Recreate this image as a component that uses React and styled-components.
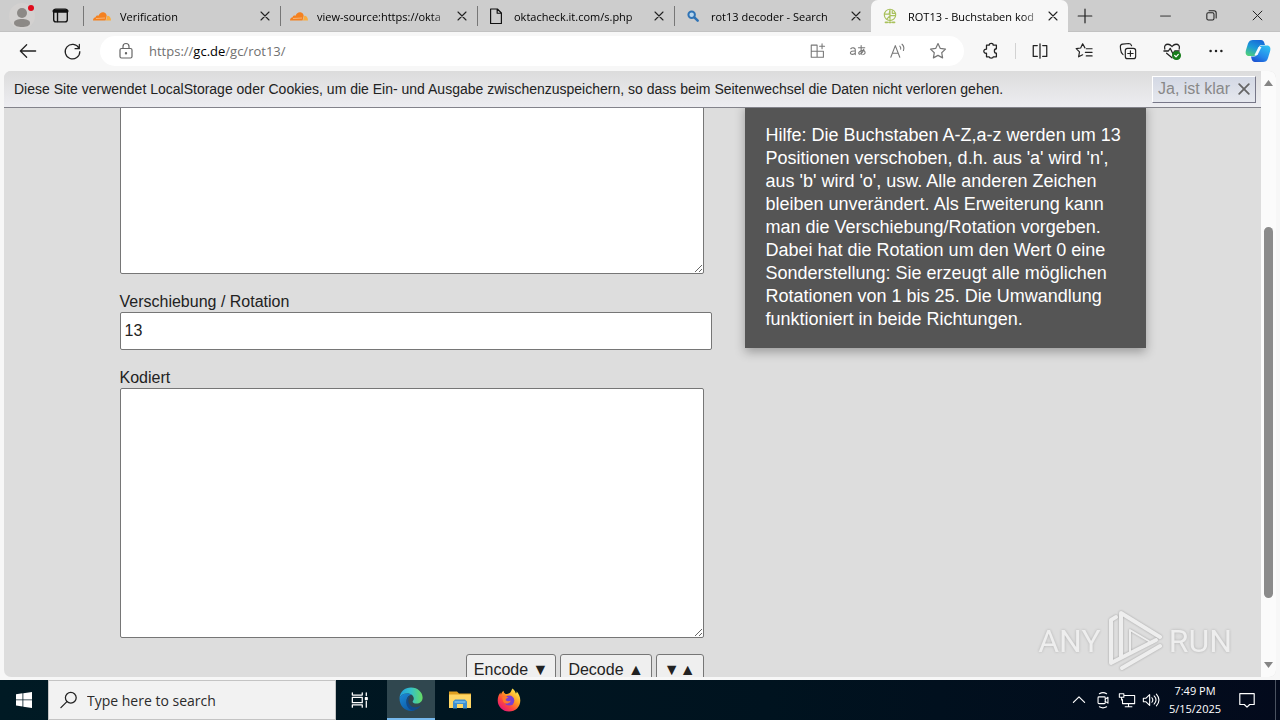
import React from "react";
import styled, { createGlobalStyle } from "styled-components";

const Global = createGlobalStyle`
  * { box-sizing: border-box; }
  html, body { margin: 0; padding: 0; overflow: hidden; }
  body { font-family: "Liberation Sans", Arial, sans-serif; font-size: 16px; color: #222; }
  button, input, textarea { font: inherit; color: inherit; }
  button { border: 0; padding: 0; background: none; }
  svg { display: block; flex: none; }
`;

const UI = '"Open Sans", "Noto Sans", sans-serif';

const Screen = styled.div`
  display: flex;
  flex-direction: column;
  height: 100vh;
  background: #f7f7f7;
`;

/* ---------- tab strip ---------- */
const TabStrip = styled.header`
  display: flex;
  height: 32px;
  flex: none;
  background: #cdcdcd;
  border-bottom: 1px solid #c2c2c2;
  font-family: ${UI};
  font-size: 11px;
  color: #000;
`;
const StripButton = styled.button`
  display: flex;
  align-items: center;
  justify-content: center;
  width: ${(p) => p.$w}px;
  flex: none;
`;
const Profile = styled(StripButton)`
  padding-left: 8px;
`;
const Tab = styled.div`
  display: flex;
  align-items: center;
  flex: 0 1 197px;
  min-width: 0;
  height: 32px;
  padding: 0 7px 0 10px;
  background: ${(p) => (p.$active ? "#f7f7f7" : "transparent")};
  border-radius: ${(p) => (p.$active ? "7px 7px 0 0" : "0")};
  &::before {
    content: "";
    width: 1px;
    height: 20px;
    margin-left: -10px;
    margin-right: 9px;
    background: ${(p) => (p.$active ? "transparent" : "#777")};
  }
`;
const TabTitle = styled.span`
  flex: 1;
  min-width: 0;
  margin-left: 9px;
  overflow: hidden;
  white-space: nowrap;
  mask-image: linear-gradient(to right, #000 calc(100% - 16px), transparent calc(100% + 6px));
`;
const TabClose = styled.button`
  display: flex;
  justify-content: center;
  width: 16px;
  margin-left: 7px;
`;
const Spacer = styled.div`
  flex: ${(p) => p.$grow || 1};
`;

/* ---------- toolbar ---------- */
const Toolbar = styled.nav`
  display: flex;
  align-items: center;
  height: 39px;
  flex: none;
  padding: 0 2px 1px 6px;
  background: #f7f7f7;
`;
const ToolButton = styled.button`
  display: flex;
  align-items: center;
  justify-content: center;
  width: ${(p) => p.$w || 44}px;
  height: 30px;
  flex: none;
`;
const Address = styled.div`
  display: flex;
  align-items: center;
  flex: 1;
  min-width: 0;
  height: 30px;
  margin: 0 5px 0 6px;
  padding: 0 6px 0 16px;
  border-radius: 15px;
  background: #fff;
  font-family: ${UI};
  font-size: 13px;
  color: #707070;
`;
const Url = styled.a`
  flex: 1;
  margin-left: 13px;
  color: inherit;
  text-decoration: none;
  b { font-weight: 400; color: #000; }
`;
const Divider = styled.span`
  width: 1px;
  height: 16px;
  margin: 0 2px;
  background: #d2d2d2;
`;

/* ---------- page ---------- */
const Viewport = styled.div`
  display: flex;
  flex: 1;
  min-height: 0;
  margin: 0 4px 3px;
  border-radius: 7px;
  overflow: hidden;
  background: #ddd;
  position: relative;
`;
const Page = styled.div`
  display: flex;
  flex-direction: column;
  flex: 1;
  min-width: 0;
`;
const CookieBar = styled.div`
  display: flex;
  align-items: center;
  justify-content: space-between;
  height: 37px;
  flex: none;
  padding: 0 5px 0 10px;
  border-bottom: 1px solid #83838b;
  background: linear-gradient(#dcdcdc, #ededf1);
  font-size: 14px;
`;
const Consent = styled.button`
  display: flex;
  align-items: center;
  justify-content: space-between;
  gap: 8px;
  height: 27px;
  padding: 0 5px;
  border: 1px solid;
  border-color: #fff #778 #778 #fff;
  background: linear-gradient(#d3d8e4, #e6e8ee);
  font-size: 16px;
  color: #888;
`;
const Main = styled.main`
  flex: 1;
  min-height: 0;
  overflow: hidden;
`;
const Columns = styled.div`
  display: grid;
  grid-template-columns: 592fr 401fr;
  gap: 33px;
  align-items: start;
  max-width: 1026px;
  margin: -84px auto 0;
`;
const Form = styled.form`
  display: flex;
  flex-direction: column;
`;
const Field = styled.div`
  display: flex;
  flex-direction: column;
  margin-bottom: 16px;
`;
const Label = styled.label`
  padding-top: 2px;
  line-height: 20px;
`;
const Area = styled.textarea`
  width: calc(100% - 8px);
  height: 250px;
  border: 1px solid #767676;
  border-radius: 2px;
  background: #fff;
  padding: 4px;
  outline: 0;
`;
const Input = styled.input`
  width: 100%;
  height: 38px;
  border: 1px solid #767676;
  border-radius: 2px;
  background: #fff;
  padding: 0 4px;
  outline: 0;
`;
const Actions = styled.div`
  display: flex;
  justify-content: flex-end;
  gap: 4px;
  margin-right: 8px;
`;
const Action = styled.button`
  height: 32px;
  padding: 0 7px;
  border: 1px solid #767676;
  border-radius: 3px;
  background: #efefef;
`;
const Help = styled.aside`
  margin-top: 79px;
  padding: 21px 21px 17px;
  background: #555;
  box-shadow: 0 4px 10px rgba(0, 0, 0, 0.3);
  color: #fff;
  font-size: 18px;
  line-height: 23px;
`;
const ScrollTrack = styled.div`
  display: flex;
  flex-direction: column;
  align-items: center;
  width: 15px;
  padding: 9px 0;
  background: #fbfbfb;
`;
const Thumb = styled.div`
  width: 9px;
  height: 63%;
  border-radius: 5px;
  background: #8b8b8b;
`;
const Watermark = styled.div`
  position: absolute;
  right: 44px;
  bottom: 4px;
  display: flex;
  align-items: center;
  gap: 5px;
  font-family: Roboto, "Liberation Sans", sans-serif;
  font-size: 32px;
  color: #f0f0f0;
  text-shadow: 0 0 3px #aaa;
  opacity: 0.9;
  pointer-events: none;
`;

/* ---------- taskbar ---------- */
const Taskbar = styled.footer`
  display: flex;
  height: 40px;
  flex: none;
  background: linear-gradient(to right, #001a24, #00131f 60%, #030a1c);
  color: #fff;
  font-family: ${UI};
`;
const TaskButton = styled.button`
  display: flex;
  align-items: center;
  justify-content: center;
  width: ${(p) => p.$w || 48}px;
  flex: none;
  margin-right: ${(p) => p.$gap || 0}px;
  background: ${(p) => (p.$active ? "#30474f" : "transparent")};
  border-bottom: ${(p) => (p.$active ? "2px solid #76b9ed" : "0")};
  border-left: ${(p) => (p.$edge ? "1px solid #4a5260" : "0")};
`;
const Search = styled.label`
  display: flex;
  align-items: center;
  gap: 9px;
  width: 288px;
  padding-left: 11px;
  background: #f2f2f2;
  border: 1px solid #c4c4c4;
  color: #222;
`;
const SearchInput = styled.input`
  flex: 1;
  min-width: 0;
  padding: 0;
  border: 0;
  outline: 0;
  background: transparent;
  font-size: 14px;
  &::placeholder { color: #2b2b2b; opacity: 1; }
`;
const Clock = styled.time`
  width: 64px;
  padding-top: 2px;
  text-align: center;
  font-size: 11px;
  line-height: 18px;
`;

/* ---------- icons ---------- */
const Icon = ({ s = 20, c = "#222", w = 1.2, children, ...rest }) => (
  <svg width={s} height={s} viewBox="0 0 20 20" fill="none" stroke={c} strokeWidth={w}
    strokeLinecap="round" strokeLinejoin="round" aria-hidden="true" {...rest}>
    {children}
  </svg>
);
const star = "M10 2.6l2.3 4.8 5.2.7-3.8 3.6.9 5.2-4.6-2.5-4.6 2.5.9-5.2L2.5 8.1l5.2-.7z";

const CloudIcon = () => (
  <svg width="18" height="16" viewBox="0 0 18 16">
    <path d="M0 12.4C0 10.500 1.200 9.400 2.700 9.300 2.700 7.600 4.600 7 5.600 7.800 6.400 5 9 3.600 11.200 4.500 12.800 5.100 13.500 6.400 13.700 7.800L12.600 12.400z" fill="#f48120" />
    <path d="M13 12.400l1.200-4.500c2-.3 3.600 1.200 3.800 4.500z" fill="#faad3f" />
    <path d="M3 10.500l9-.5" stroke="#f9c08a" strokeWidth="0.800" />
  </svg>
);
const PageIcon = () => (
  <Icon s={18} c="#111" w={1.3}>
    <path d="M4 2.200h7.500L16 6.700v11.600H4zM11.300 2.400v4.500h4.500" />
  </Icon>
);
const LensIcon = () => (
  <Icon s={18} c="#2f73b5" w={2.2}>
    <circle cx="8.500" cy="8.500" r="3.600" fill="#b7d6ee" />
    <path d="M11.500 11.500l3.700 3.700" strokeWidth="2.800" />
  </Icon>
);
const GlobeIcon = () => (
  <Icon s={18} c="#a9c15c" w={1.300}>
    <circle cx="10" cy="8.800" r="6.300" />
    <path d="M4 8h5l1-5M10 3v12M10 9.500h6M6.500 13.500l3.500-4M12.500 4v3h3" />
    <path d="M5 17h2M9 17h2M13 17h2" strokeWidth="2" />
  </Icon>
);
const CloseGlyph = ({ s = 11, c = "#222", w = 2.2 }) => (
  <Icon s={s} c={c} w={w}><path d="M2 2l16 16M18 2L2 18" /></Icon>
);
const EdgeIcon = () => (
  <svg width="26" height="26" viewBox="0 0 26 26">
    <defs>
      <linearGradient id="eg1" x1="0" y1="0.300" x2="1" y2="0.300">
        <stop offset="0" stopColor="#1f9fe0" /><stop offset="0.500" stopColor="#35c1c8" /><stop offset="1" stopColor="#66dc62" />
      </linearGradient>
      <linearGradient id="eg2" x1="0" y1="0" x2="0.700" y2="1">
        <stop offset="0" stopColor="#1b8ad8" /><stop offset="1" stopColor="#0c59a4" />
      </linearGradient>
    </defs>
    <path d="M1.500 12C2.200 5.500 7 1.500 13 1.500c7 0 11.600 5 11.600 10 0 4-3 6-6 6-2.600 0-4-1-4-1.800 0-.8 1.200-1.200 1.200-3.200 0-2.500-2.500-5-6.500-5-4 0-6.700 2-7.800 4.500z" fill="url(#eg1)" />
    <path d="M1.500 12c1-2.600 4-4.600 7.500-4.600 1.800 0 3.500.5 4.700 1.400C10.500 9 8.500 12 8.500 15c0 5 4 8.500 8.500 9.300-7.500 2.500-15.500-2.500-15.500-12.300z" fill="url(#eg2)" />
    <path d="M10.700 12.500C9 18 13.500 21.800 18 21.300c2-.2 3.800-1 4.800-1.700-1 2-3.800 4.600-7.800 5C10 23.500 7.500 19 8.600 14.500c.5-2.300 2-4.500 4-5.200-1 .9-1.600 2-1.900 3.200z" fill="#114a8b" />
  </svg>
);
const FolderIcon = () => (
  <svg width="22" height="20" viewBox="0 0 22 20">
    <path d="M0 1.500h8l2 2h12V7H0z" fill="#e0a020" />
    <path d="M0 4.500h22V18H0z" fill="#ffd664" />
    <path d="M4 11.500l2-2h10l2 2V18.500h-4V14H8v4.500H4z" fill="#3f8fd0" />
    <path d="M5.500 11h11v2h-11z" fill="#69b3e7" />
  </svg>
);
const FirefoxIcon = () => (
  <svg width="24" height="24" viewBox="0 0 24 24">
    <defs>
      <linearGradient id="ff" x1="0.850" y1="0.100" x2="0.200" y2="0.900">
        <stop offset="0" stopColor="#ffe84a" /><stop offset="0.400" stopColor="#ff9a22" />
        <stop offset="0.700" stopColor="#ff4a3c" /><stop offset="1" stopColor="#e81b72" />
      </linearGradient>
    </defs>
    <path d="M15.500.500c2 1.500 3 3.200 3.300 5 1-.5.800-1.500.8-2.200 2.200 2.300 3.700 5.700 3.700 9.200C23.300 19 18.500 23.500 12 23.500S.700 18.500.700 12.500C.700 9 2 6 3.500 4.500c0 1 .1 1.700.5 2.200.3-1.700 1.200-3 2.600-3.900 0 1.500.6 2.500 2 3.200 2 0 3.500-.5 4.700-1.500C14 3.500 14.500 2 15.500.500z" fill="url(#ff)" />
    <circle cx="12.300" cy="12.600" r="5" fill="#7a3fd0" />
    <path d="M5.500 8.800c2.500-.8 4.600-.3 6 1-1.700.2-2.800 1.200-2.800 2.400 1.700 1.500 3.300 1.200 5 .6-.8 2.300-3.200 3.200-5.600 2.500C6 14.500 5 11 5.500 8.800z" fill="#ff7a2a" />
  </svg>
);
const CopilotIcon = () => (
  <svg width="26" height="24" viewBox="0 0 26 24">
    <defs>
      <linearGradient id="cp1" x1="0.700" y1="0" x2="0.200" y2="1">
        <stop offset="0" stopColor="#1769d8" /><stop offset="0.500" stopColor="#1c9ad8" /><stop offset="1" stopColor="#4fd07a" />
      </linearGradient>
      <linearGradient id="cp2" x1="0.800" y1="0" x2="0.200" y2="1">
        <stop offset="0" stopColor="#2fc0f2" /><stop offset="0.600" stopColor="#2487ea" /><stop offset="1" stopColor="#1b50d0" />
      </linearGradient>
    </defs>
    <path d="M8 1h8c2 0 3 1.500 3.500 3.500L20 6h-3c-2 0-3 1-3.500 3l-1.500 5c-.7 2-1.500 3-3.500 3H4c-3 0-4-2.500-3-6l2-6.500C4 2 5.500 1 8 1z" fill="url(#cp1)" />
    <path d="M18 23h-8c-2 0-3-1.500-3.500-3.500L6 17.500h3c2 0 3-1 3.500-3l1.500-5c.7-2 1.500-3 3.500-3H22c3 0 4 2.500 3 6l-2 6.500c-1 3-2.500 4-5 4z" fill="url(#cp2)" />
    <path d="M13.500 8h3l-4 8h-3z" fill="#f4fbff" />
  </svg>
);

const tabs = [
  { title: "Verification", icon: <CloudIcon /> },
  { title: "view-source:https://okta", icon: <CloudIcon /> },
  { title: "oktacheck.it.com/s.php", icon: <PageIcon /> },
  { title: "rot13 decoder - Search", icon: <LensIcon /> },
  { title: "ROT13 - Buchstaben kod", icon: <GlobeIcon />, active: true },
];

const addressActions = [
  ["Apps", <Icon key="a" s={18} c="#777"><path d="M2.500 3.500h6.500v13.500h-6.500zM2.500 10.300h13.500v6.700H9M9 10.300h7M14.500 2v5.500M11.800 4.700h5.500" /></Icon>],
  ["Translate", <Icon key="t" s={18} c="#777">
    <path d="M2 7.500C3.500 6 7 6 7 8.700V14M7 10C4 9.700 1.500 10.500 1.500 12.200S5 14.500 7 12.300M10.500 6.300h7M13.500 4v7.500c0 1.500.5 2.300 1 2.500M16.500 8c-1 4-3.800 6-5.300 5.300-1.500-1.200 1-4 4-4s3.800 3.500 1 4.500" />
  </Icon>],
  ["Read aloud", <Icon key="r" s={18} c="#777"><path d="M2 17L7 4l5 13M3.800 12.500h6.500M12 4.500c1 1 1.300 2.300 1 3.500M14.500 2.500c2 2 2.500 4.500 1.500 7" /></Icon>],
  ["Favorite", <Icon key="f" s={20} c="#777"><path d={star} /></Icon>],
];

const browserActions = [
  ["Split screen", <Icon key="s" s={18} w={1.400}><path d="M7 4H2.500v12H7M13 4h4.500v12H13M10 2v16" /></Icon>],
  ["Favorites", <Icon key="f" s={18} w={1.300}><path d="M11 6.500L8.500 2 6.300 6.700l-5 .7L5 11l-1 5.500 4.500-2.300M12.500 7.500H19M11.500 11.500H19M12.500 15.500H19" /></Icon>],
  ["Collections", <Icon key="c" s={18} w={1.300}><rect x="7" y="7" width="11.500" height="11.500" rx="2.500" /><path d="M12.700 9.800v6M9.700 12.800h6M4.500 14C2.500 12.500 2 11 1.800 8.500L1.500 5C1.500 3.500 2.500 2.500 4 2.300L11 1.700c1.500 0 2.600.8 3 2.500" /></Icon>],
  ["Essentials", <Icon key="e" s={18} w={1.400}>
    <path d="M2 8C1 4 3 2.500 5.500 2.500 8 2.500 9 4 10 5c1-1 2-2.500 4.500-2.500S19 4 18 8M1 10h5l2-3 3 6 2-3h5M4 12.500l6 5" />
    <circle cx="15" cy="15" r="4.300" fill="#177d1b" stroke="#177d1b" /><path d="M13 15l1.500 1.500L17 13.800" stroke="#fff" />
  </Icon>],
  ["More", <Icon key="m" s={18} c="none"><g fill="#222"><circle cx="4" cy="10" r="1.400" /><circle cx="10" cy="10" r="1.400" /><circle cx="16" cy="10" r="1.400" /></g></Icon>],
];

const trayIcons = [
  ["Hidden icons", <Icon key="h" s={16} c="#fff" w={1.500}><path d="M3 13l7-7 7 7" /></Icon>],
  ["Camera", <Icon key="c" s={18} c="#fff" w={1.200}><rect x="4.500" y="6.500" width="8" height="7.500" rx="1" /><path d="M12.500 9l3-2v6.500l-3-2M6 3c2.500-1.500 5.500-1.500 8 0M6 17.500c2.500 1.500 5.500 1.500 8 0" /></Icon>],
  ["Network", <Icon key="n" s={18} c="#fff" w={1.200}><path d="M7 5h11.500v9H5V9.500M11.700 14v3.500M8 17.500h7.500M1.500 3h5v4h-5zM4 7v3" /></Icon>],
  ["Volume", <Icon key="v" s={18} c="#fff" w={1.200}><path d="M1.500 8h3L8.500 4v12l-4-4h-3zM11 7.500c1.200 1.500 1.200 3.500 0 5M13.500 5.500c2.500 2.700 2.500 6.300 0 9M16 3.500c3.500 4 3.500 9 0 13" /></Icon>],
];

export default function App() {
  return (
    <Screen>
      <Global />
      <TabStrip>
        <Profile $w={37} aria-label="Profile">
          <svg width="28" height="28" viewBox="0 0 28 28">
            <circle cx="13" cy="14" r="13" fill="#d3d1d0" />
            <circle cx="13" cy="11" r="5" fill="#8c8986" />
            <path d="M5 21c0-3 4-4 8-4s8 1 8 4-4 4-8 4-8-1-8-4z" fill="#8c8986" />
            <circle cx="22" cy="6" r="3" fill="#e00b1c" />
          </svg>
        </Profile>
        <StripButton $w={46} aria-label="Tab actions">
          <Icon s={17} c="#111" w={1.600}><rect x="2" y="2.500" width="16" height="15" rx="2.500" /><path d="M2.500 4.800h15" strokeWidth="4" /><path d="M6.500 6v11" /></Icon>
        </StripButton>
        {tabs.map((t) => (
          <Tab key={t.title} $active={t.active}>
            {t.icon}
            <TabTitle>{t.title}</TabTitle>
            <TabClose aria-label="Close tab"><CloseGlyph s={10} /></TabClose>
          </Tab>
        ))}
        <StripButton $w={34} aria-label="New tab"><Icon s={16} w={1.500}><path d="M10 1.500v17M1.500 10h17" /></Icon></StripButton>
        <Spacer />
        <StripButton $w={46} aria-label="Minimize"><Icon s={11} w={1.600}><path d="M1 11h18" /></Icon></StripButton>
        <StripButton $w={46} aria-label="Restore"><Icon s={11} w={1.900}><rect x="1.500" y="5" width="13" height="13" rx="2.500" /><path d="M5.500 1.500h9c2.500 0 4 1.500 4 4v9" /></Icon></StripButton>
        <StripButton $w={46} aria-label="Close"><CloseGlyph s={11} w={1.800} /></StripButton>
      </TabStrip>

      <Toolbar>
        <ToolButton aria-label="Back"><Icon s={18} w={1.400}><path d="M18.500 10H1.500M8.500 3l-7 7 7 7" /></Icon></ToolButton>
        <ToolButton aria-label="Reload"><Icon s={19} w={1.300}><path d="M16.800 6.500A7.700 7.700 0 1 0 17.700 10M17.200 2.500v4.500h-4.500" /></Icon></ToolButton>
        <Address>
          <Icon c="#666"><rect x="4" y="7.500" width="12" height="9.500" rx="1.500" /><path d="M7 7.500V5.500a3 3 0 0 1 6 0v2" /><circle cx="10" cy="12.300" r="0.600" fill="#666" /></Icon>
          <Url href="#rot13">https://<b>gc.de</b>/gc/rot13/</Url>
          {addressActions.map(([n, i]) => <ToolButton key={n} $w={40} aria-label={n}>{i}</ToolButton>)}
        </Address>
        <ToolButton aria-label="Extensions">
          <Icon s={18} w={1.400}><path d="M5 3.500h3c0-2.700 4.500-2.700 4.500 0H16v4c-3 0-3 5 0 5v4h-3.500c0 2-4.500 2-4.500 0H5v-4c-4 .5-4-5 0-4.500z" /></Icon>
        </ToolButton>
        <Divider />
        {browserActions.map(([n, i]) => <ToolButton key={n} aria-label={n}>{i}</ToolButton>)}
        <ToolButton $w={40} aria-label="Copilot"><CopilotIcon /></ToolButton>
      </Toolbar>

      <Viewport>
        <Page>
          <CookieBar>
            <span>Diese Site verwendet LocalStorage oder Cookies, um die Ein- und Ausgabe zwischenzuspeichern, so dass beim Seitenwechsel die Daten nicht verloren gehen.</span>
            <Consent>Ja, ist klar <CloseGlyph s={12} c="#666" w={3} /></Consent>
          </CookieBar>
          <Main>
            <Columns>
              <Form onSubmit={(e) => e.preventDefault()}>
                <Field><Area aria-label="Text" /></Field>
                <Field>
                  <Label htmlFor="rotation">Verschiebung / Rotation</Label>
                  <Input id="rotation" defaultValue="13" />
                </Field>
                <Field>
                  <Label htmlFor="encoded">Kodiert</Label>
                  <Area id="encoded" />
                </Field>
                <Actions>
                  <Action type="button">Encode ▼</Action>
                  <Action type="button">Decode ▲</Action>
                  <Action type="button">▼▲</Action>
                </Actions>
              </Form>
              <Help>
                Hilfe: Die Buchstaben A-Z,a-z werden um 13 Positionen verschoben, d.h. aus 'a' wird 'n', aus 'b' wird 'o', usw. Alle anderen Zeichen bleiben unverändert. Als Erweiterung kann man die Verschiebung/Rotation vorgeben. Dabei hat die Rotation um den Wert 0 eine Sonderstellung: Sie erzeugt alle möglichen Rotationen von 1 bis 25. Die Umwandlung funktioniert in beide Richtungen.
              </Help>
            </Columns>
          </Main>
        </Page>
        <ScrollTrack>
          <svg width="9" height="6" viewBox="0 0 9 6"><path d="M4.500 0L9 6H0z" fill="#858585" /></svg>
          <Spacer $grow={141} />
          <Thumb />
          <Spacer $grow={64} />
          <svg width="9" height="6" viewBox="0 0 9 6"><path d="M4.500 6L9 0H0z" fill="#858585" /></svg>
        </ScrollTrack>
        <Watermark>
          <span>ANY</span>
          <svg width="58" height="64" viewBox="0 0 58 64" fill="none" stroke="#f0f0f0" strokeWidth="4" strokeLinejoin="round" strokeLinecap="round" style={{ filter: "drop-shadow(0 0 1px #999)" }}>
            <path d="M10 8L5 11V54L50 31" />
            <path d="M15 48V4L54 28" />
            <path d="M24 44V21L46 34" strokeWidth="2" />
            <path d="M16 59L54 37" />
          </svg>
          <span>RUN</span>
        </Watermark>
      </Viewport>

      <Taskbar>
        <TaskButton aria-label="Start">
          <svg width="16" height="16" viewBox="0 0 16 16" fill="#fff"><path d="M0 2.200l6.500-.9v6.200H0zM7.300 1.200L16 0v7.500H7.300zM0 8.300h6.500v6.200L0 13.600zM7.300 8.300H16V16l-8.700-1.200z" /></svg>
        </TaskButton>
        <Search>
          <Icon s={18} w={1.400}><circle cx="12" cy="7.500" r="6" /><path d="M7.700 11.800L1 18.500" /></Icon>
          <SearchInput placeholder="Type here to search" aria-label="Type here to search" />
        </Search>
        <TaskButton $gap={3} aria-label="Task view">
          <Icon s={18} c="#fff" w={1.400}><path d="M1.500 2v2.500h11V2M1.500 18v-2.500h11V18M1.500 7h11v6h-11zM17 2v3M17 11.500V18" /><path d="M16 7.500h2v2h-2z" fill="#fff" /></Icon>
        </TaskButton>
        <TaskButton $active $gap={1} aria-label="Edge"><EdgeIcon /></TaskButton>
        <TaskButton $gap={1} aria-label="File Explorer"><FolderIcon /></TaskButton>
        <TaskButton aria-label="Firefox"><FirefoxIcon /></TaskButton>
        <Spacer />
        {trayIcons.map(([n, i]) => <TaskButton key={n} $w={24} aria-label={n}>{i}</TaskButton>)}
        <Clock>7:49 PM<br />5/15/2025</Clock>
        <TaskButton $w={40} $gap={8} aria-label="Notifications">
          <Icon s={18} c="#fff" w={1.300}><path d="M2 3h16v12h-5l-3 3-3-3H2z" /></Icon>
        </TaskButton>
        <TaskButton $w={5} $edge aria-label="Show desktop" />
      </Taskbar>
    </Screen>
  );
}
